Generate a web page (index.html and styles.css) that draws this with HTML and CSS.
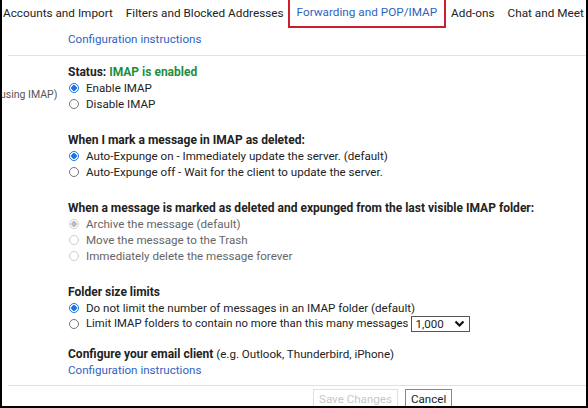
FILE: index.html
```html
<!DOCTYPE html>
<html lang="en">
<head>
    <meta charset="UTF-8">
    <meta name="viewport" content="width=device-width, initial-scale=1.0">
    <title>Settings - Forwarding and POP/IMAP</title>
    <link rel="stylesheet" href="styles.css">
</head>
<body>

    <div class="frame">
        <div class="tabs">
            <span class="tab">Accounts and Import</span>
            <span class="tab">Filters and Blocked Addresses</span>
            <span class="tab active">Forwarding and POP/IMAP</span>
            <span class="tab">Add-ons</span>
            <span class="tab">Chat and Meet</span>
        </div>

        <div class="top-link">
            <a href="#">Configuration instructions</a>
        </div>

        <div class="settings">
            <div class="side-label">using IMAP)</div>
            <div class="options">

                <div class="group">
                    <div class="heading">Status: <span class="ok">IMAP is enabled</span></div>
                    <label class="opt"><input type="radio" name="imap" checked> Enable IMAP</label>
                    <label class="opt"><input type="radio" name="imap"> Disable IMAP</label>
                </div>

                <div class="group">
                    <div class="heading">When I mark a message in IMAP as deleted:</div>
                    <label class="opt"><input type="radio" name="expunge" checked> Auto-Expunge on - Immediately update the server. (default)</label>
                    <label class="opt"><input type="radio" name="expunge"> Auto-Expunge off - Wait for the client to update the server.</label>
                </div>

                <div class="group">
                    <div class="heading">When a message is marked as deleted and expunged from the last visible IMAP folder:</div>
                    <label class="opt off"><input type="radio" name="deleted" checked disabled> Archive the message (default)</label>
                    <label class="opt off"><input type="radio" name="deleted" disabled> Move the message to the Trash</label>
                    <label class="opt off"><input type="radio" name="deleted" disabled> Immediately delete the message forever</label>
                </div>

                <div class="group short">
                    <div class="heading">Folder size limits</div>
                    <label class="opt"><input type="radio" name="limit" checked> Do not limit the number of messages in an IMAP folder (default)</label>
                    <label class="opt narrow"><input type="radio" name="limit"> Limit IMAP folders to contain no more than this many messages
                        <span class="select">1,000
                            <svg width="11" height="8" viewBox="0 0 11 8"><path d="M1.5 1.5 L5.5 5.5 L9.5 1.5" fill="none" stroke="#111" stroke-width="2.2"/></svg>
                        </span>
                    </label>
                </div>

                <div class="group last">
                    <div class="client"><b>Configure your email client</b> (e.g. Outlook, Thunderbird, iPhone)</div>
                    <a href="#">Configuration instructions</a>
                </div>

            </div>
        </div>

        <div class="actions">
            <button class="btn" disabled>Save Changes</button>
            <button class="btn">Cancel</button>
        </div>
    </div>

</body>
</html>
```

FILE: styles.css
```css
html, body {
    margin: 0;
    height: 100%;
}
body {
    font-family: Roboto, "Liberation Sans", Arial, sans-serif;
    font-size: 11.6px;
    color: #222;
    background: #fff;
}
.frame {
    box-sizing: border-box;
    height: 408px;
    border: 2px solid #000;
    border-top: none;
    overflow: hidden;
}
a {
    color: #2f63c3;
    text-decoration: none;
}
.tabs {
    display: flex;
    gap: 13px;
    height: 28px;
    align-items: stretch;
    white-space: nowrap;
    font-size: 11.75px;
    margin-left: 1px;
}
.tab {
    display: flex;
    align-items: center;
    padding-bottom: 2px;
}
.active {
    color: #2f63c3;
    border: 2px solid #cc1f2b;
    border-top: none;
    padding: 0 7px 2px 7px;
    margin: 0 -8px 0 -9px;
}
.top-link {
    padding: 3px 0 8px 60px;
    border-bottom: 1px solid #e3e3e3;
    margin-left: 6px;
    line-height: 16px;
}
.settings {
    display: grid;
    grid-template-columns: 66px 1fr;
    padding-top: 8px;
}
.side-label {
    font-size: 10.5px;
    color: #555;
    margin-top: 24px;
    margin-left: -2px;
    white-space: nowrap;
}
.group {
    margin-bottom: 20px;
    line-height: 16px;
}
.group.short {
    margin-bottom: 14px;
}
.group.last {
    margin-bottom: 7px;
}
.heading {
    font-weight: bold;
    font-size: 12px;
}
.client b {
    font-size: 12px;
}
.ok {
    color: #1e8e3e;
}
.opt {
    display: flex;
    align-items: center;
    white-space: nowrap;
    height: 16px;
}
.opt.narrow {
    font-size: 11.3px;
}
.opt input {
    appearance: none;
    width: 10px;
    height: 10px;
    margin: 0 7px 0 1px;
    border: 1px solid #777;
    border-radius: 50%;
    box-sizing: border-box;
    background: #fff;
}
.opt input:checked {
    border-color: #1a73e8;
    background: radial-gradient(circle, #1a73e8 0 2.5px, #fff 3px);
}
.opt.off {
    color: #666;
}
.opt.off input {
    border-color: #ccc;
}
.opt.off input:checked {
    border-color: #ccc;
    background: radial-gradient(circle, #bbb 0 2.5px, #fff 3px);
}
.select {
    display: inline-flex;
    align-items: center;
    justify-content: space-between;
    box-sizing: border-box;
    width: 59px;
    height: 16px;
    margin-left: 3px;
    padding: 0 4px 0 3px;
    border: 1px solid #555;
    font-size: 11.6px;
}
.actions {
    border-top: 1px solid #e0e0e0;
    margin-left: 6px;
    padding: 3px 0 0 305px;
    display: flex;
    gap: 7px;
}
.btn {
    font-family: inherit;
    font-size: 11.6px;
    background: #fff;
    border: 1px solid #888;
    color: #222;
    height: 19px;
    padding: 0 5px;
}
.btn:disabled {
    color: #c8c8c8;
    border-color: #e0e0e0;
}
```
